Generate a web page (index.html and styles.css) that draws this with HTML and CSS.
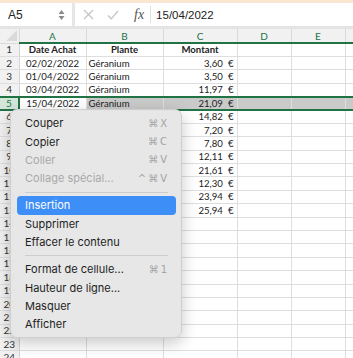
FILE: index.html
```html
<!DOCTYPE html>
<html lang="fr">
<head>
    <meta charset="UTF-8">
    <title>Classeur - Feuille 1</title>
    <link rel="stylesheet" href="styles.css">
</head>
<body>

<div class="app">
    <div class="topline"></div>

    <div class="toolbar">
        <div class="namebox">
            <span>A5</span>
            <svg class="stepper" width="7" height="12" viewBox="0 0 7 12">
                <path d="M3.5 1 L6.5 5 L0.5 5 Z" fill="#8a8a8a"/>
                <path d="M3.5 11 L6.5 7 L0.5 7 Z" fill="#8a8a8a"/>
            </svg>
        </div>
        <div class="sep"></div>
        <div class="formula">
            <svg class="ico" width="11" height="11" viewBox="0 0 11 11">
                <path d="M1 1 L10 10 M10 1 L1 10" stroke="#c4c4c4" stroke-width="1.3" fill="none"/>
            </svg>
            <svg class="ico" width="12" height="10" viewBox="0 0 12 10">
                <path d="M1 5.5 L4.3 8.8 L11 1" stroke="#c4c4c4" stroke-width="1.3" fill="none"/>
            </svg>
            <span class="fx">fx</span>
            <div class="vline"></div>
            <span class="ftext">15/04/2022</span>
        </div>
    </div>

    <div class="gap"></div>

    <table class="sheet">
        <colgroup>
            <col class="c-row"><col class="c-a"><col class="c-b"><col class="c-c"><col class="c-d"><col class="c-e"><col class="c-f">
        </colgroup>
        <thead>
            <tr>
                <th class="corner"><div class="tri"></div></th>
                <th>A</th><th>B</th><th>C</th><th>D</th><th>E</th><th class="plain"></th>
            </tr>
        </thead>
        <tbody id="rows"></tbody>
    </table>

    <div class="menu">
        <div class="item"><span>Couper</span><span class="key">⌘X</span></div>
        <div class="item"><span>Copier</span><span class="key">⌘C</span></div>
        <div class="item off"><span>Coller</span><span class="key">⌘V</span></div>
        <div class="item off"><span>Collage spécial...</span><span class="key">^⌘V</span></div>
        <div class="divider"></div>
        <div class="item hot"><span>Insertion</span></div>
        <div class="item"><span>Supprimer</span></div>
        <div class="item"><span>Effacer le contenu</span></div>
        <div class="divider"></div>
        <div class="item"><span>Format de cellule...</span><span class="key">⌘1</span></div>
        <div class="item"><span>Hauteur de ligne...</span></div>
        <div class="item"><span>Masquer</span></div>
        <div class="item"><span>Afficher</span></div>
    </div>
</div>

<script>
    // rows 6+ of A and B sit under the context menu, only the amounts show
    const data = [
        ["02/02/2022", "Géranium", "3,60"],
        ["01/04/2022", "Géranium", "3,50"],
        ["03/04/2022", "Géranium", "11,97"],
        ["15/04/2022", "Géranium", "21,09"],
        ["", "", "14,82"],
        ["", "", "7,20"],
        ["", "", "7,80"],
        ["", "", "12,11"],
        ["", "", "21,61"],
        ["", "", "12,30"],
        ["", "", "23,94"],
        ["", "", "25,94"]
    ];

    const body = document.getElementById("rows");
    let html = '<tr><td class="rh">1</td><td class="hd">Date Achat</td><td class="hd">Plante</td><td class="hd">Montant</td><td></td><td></td><td></td></tr>';

    for (let i = 2; i <= 25; i++) {
        const row = data[i - 2];
        const sel = i === 5;
        html += '<tr' + (sel ? ' class="sel"' : '') + '>';
        html += '<td class="rh">' + i + '</td>';
        if (row) {
            html += '<td class="date' + (sel ? ' active' : '') + '">' + row[0] + '</td>';
            html += '<td>' + row[1] + '</td>';
            html += '<td class="num">' + row[2] + '<span class="eur">€</span></td>';
        } else {
            html += '<td></td><td></td><td></td>';
        }
        html += '<td></td><td></td><td></td></tr>';
    }
    body.innerHTML = html;
</script>

</body>
</html>
```

FILE: styles.css
```css
body {
    margin: 0;
    background: white;
    font-family: 'Liberation Sans', Arial, sans-serif;
    color: #222;
}

.app {
    position: relative;
    width: 353px;
    height: 358px;
    overflow: hidden;
}

.topline {
    height: 3px;
    background: #fbe6d2;
}

.toolbar {
    display: flex;
    height: 23px;
    background: white;
}

.namebox {
    width: 72px;
    box-sizing: border-box;
    display: flex;
    align-items: center;
    justify-content: space-between;
    padding: 0 7px 0 8px;
    font-size: 12px;
}

.sep {
    width: 3px;
    background: #e6e6e6;
}

.formula {
    flex: 1;
    display: flex;
    align-items: center;
    padding-left: 8px;
}

.formula .ico {
    margin-right: 13px;
}

.fx {
    font-family: 'Liberation Serif', serif;
    font-style: italic;
    font-size: 14px;
    color: #555;
    margin-left: 2px;
}

.vline {
    width: 1px;
    height: 17px;
    background: #e0e0e0;
    margin: 0 5px 0 6px;
}

.ftext {
    font-size: 11.5px;
}

.gap {
    height: 3px;
    background: #e4e4e4;
}

.sheet {
    border-collapse: collapse;
    table-layout: fixed;
    width: 413px;
    font-family: Lato, 'Liberation Sans', sans-serif;
    font-size: 9.6px;
}

.c-row { width: 19px; }
.c-a { width: 67px; }
.c-b { width: 77px; }
.c-c { width: 74px; }
.c-d { width: 54px; }
.c-e { width: 54px; }
.c-f { width: 68px; }

.sheet th {
    height: 13px;
    padding: 0;
    background: #f1f1f1;
    color: #217346;
    font-weight: normal;
    font-size: 10px;
    line-height: 12px;
    border-right: 1px solid #d9d9d9;
    border-bottom: 2px solid #217346;
}

.sheet th.corner {
    position: relative;
    border-bottom: 1px solid #d9d9d9;
}

.tri {
    position: absolute;
    right: 2px;
    bottom: 2px;
    width: 0;
    height: 0;
    border-left: 11px solid transparent;
    border-bottom: 11px solid #dadada;
}

.sheet tbody tr {
    height: 13.4px;
}

.sheet td {
    padding: 0 2px;
    border-right: 1px solid #dedede;
    border-bottom: 1px solid #dedede;
    white-space: nowrap;
    overflow: hidden;
    line-height: 11px;
}

.sheet td.rh {
    background: #f1f1f1;
    text-align: center;
    padding: 0;
    color: #333;
    font-size: 10px;
    border-right: 1px solid #d4d4d4;
}

.sheet td.hd {
    font-weight: bold;
    text-align: center;
}

.sheet td.date {
    text-align: center;
}

.sheet td.num {
    text-align: right;
    padding-right: 3px;
}

.eur {
    margin-left: 5px;
}

.sheet tr.sel td {
    background: #cacaca;
    border-top: 2px solid #217346;
    border-bottom: 2px solid #217346;
}

.sheet tr.sel td.rh {
    background: #d3e6da;
    color: #217346;
    border-right: 2px solid #217346;
}

.sheet tr.sel td.active {
    background: white;
}

.menu {
    position: absolute;
    left: 10px;
    top: 109px;
    width: 172px;
    box-sizing: border-box;
    padding: 4px 5px 4px 6px;
    background: rgba(231, 231, 231, 0.98);
    border: 1px solid #cfcfcf;
    border-radius: 7px;
    box-shadow: 0 5px 16px rgba(0, 0, 0, 0.22);
    font-family: Inter, 'Liberation Sans', sans-serif;
    font-size: 11px;
    color: #1e1e1e;
}

.item {
    display: flex;
    justify-content: space-between;
    align-items: center;
    height: 18.4px;
    padding: 0 7px 0 8px;
    border-radius: 4px;
}

.item.off {
    color: #a9a9a9;
}

.item.hot {
    background: #3d8ef6;
    color: white;
}

.key {
    color: #a4a4a4;
    font-family: 'DejaVu Sans', sans-serif;
    font-size: 10px;
    letter-spacing: 2px;
}

.divider {
    height: 1px;
    margin: 4px 8px 3.6px 8px;
    background: #cdcdcd;
}
```
